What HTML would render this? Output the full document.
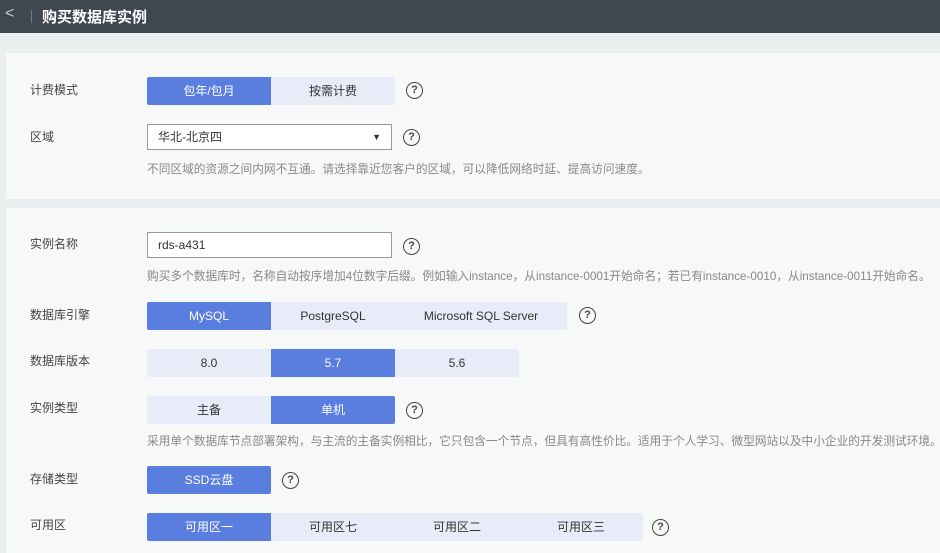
<!DOCTYPE html>
<html><head><meta charset="utf-8"><style>
*{box-sizing:border-box;margin:0;padding:0}
body{width:940px;height:553px;overflow:hidden;background:#e9eeee;font-family:"Liberation Sans","Noto Sans CJK SC",sans-serif;font-size:12px;color:#333;position:relative}
.hd{position:absolute;left:0;top:0;width:940px;height:33px;background:#3f4751;color:#fff}
.hd .t{position:absolute;left:42px;top:6px;font-size:15px;font-weight:bold}
.hd .b{position:absolute;left:5px;top:5px;font-size:16px;color:#ccc}
.hd .s{position:absolute;left:31px;top:10px;width:1px;height:13px;background:#777}
.p{position:absolute;left:6px;width:940px;background:#f6f9f8}
.l{position:absolute;left:30px;color:#444}
.g{position:absolute;left:147px;display:flex;height:28px;border-radius:2px;overflow:hidden}
.g div{width:124px;text-align:center;line-height:28px;background:#e8ecf8;color:#333}
.g div.on{background:#5a7de0;color:#fff}
.q{position:absolute;width:17px;height:17px;border:1.5px solid #444;border-radius:50%;text-align:center;font-size:11px;line-height:14px;color:#444;font-weight:bold}
.n{position:absolute;left:147px;color:#888;font-size:11.7px;white-space:nowrap}
.in{position:absolute;left:147px;width:245px;height:26px;border:1px solid #999;background:#fff;padding-left:10px;line-height:24px;font-size:12px}
</style></head><body>
<div class="hd"><span class="b">&lt;</span><span class="s"></span><span class="t">购买数据库实例</span></div>
<div class="p" style="top:53px;height:146px"></div>
<div class="p" style="top:208px;height:345px"></div>
<span class="l" style="top:81px">计费模式</span>
<div class="g" style="top:77px"><div class="on">包年/包月</div><div>按需计费</div></div>
<span class="q" style="left:406px;top:82px">?</span>
<span class="l" style="top:128px">区域</span>
<div class="in" style="top:124px">华北-北京四<span style="position:absolute;right:10px;top:0;font-size:9px">▼</span></div>
<span class="q" style="left:403px;top:129px">?</span>
<span class="n" style="top:160px">不同区域的资源之间内网不互通。请选择靠近您客户的区域，可以降低网络时延、提高访问速度。</span>
<span class="l" style="top:235px">实例名称</span>
<div class="in" style="top:232px">rds-a431</div>
<span class="q" style="left:403px;top:238px">?</span>
<span class="n" style="top:267px">购买多个数据库时，名称自动按序增加4位数字后缀。例如输入instance，从instance-0001开始命名；若已有instance-0010，从instance-0011开始命名。</span>
<span class="l" style="top:306px">数据库引擎</span>
<div class="g" style="top:302px"><div class="on">MySQL</div><div>PostgreSQL</div><div style="width:172px">Microsoft SQL Server</div></div>
<span class="q" style="left:579px;top:307px">?</span>
<span class="l" style="top:352px">数据库版本</span>
<div class="g" style="top:349px"><div>8.0</div><div class="on">5.7</div><div>5.6</div></div>
<span class="l" style="top:399px">实例类型</span>
<div class="g" style="top:396px"><div>主备</div><div class="on">单机</div></div>
<span class="q" style="left:406px;top:402px">?</span>
<span class="n" style="top:432px">采用单个数据库节点部署架构，与主流的主备实例相比，它只包含一个节点，但具有高性价比。适用于个人学习、微型网站以及中小企业的开发测试环境。</span>
<span class="l" style="top:470px">存储类型</span>
<div class="g" style="top:466px"><div class="on">SSD云盘</div></div>
<span class="q" style="left:282px;top:472px">?</span>
<span class="l" style="top:516px">可用区</span>
<div class="g" style="top:513px"><div class="on">可用区一</div><div>可用区七</div><div>可用区二</div><div>可用区三</div></div>
<span class="q" style="left:652px;top:519px">?</span>
</body></html>
